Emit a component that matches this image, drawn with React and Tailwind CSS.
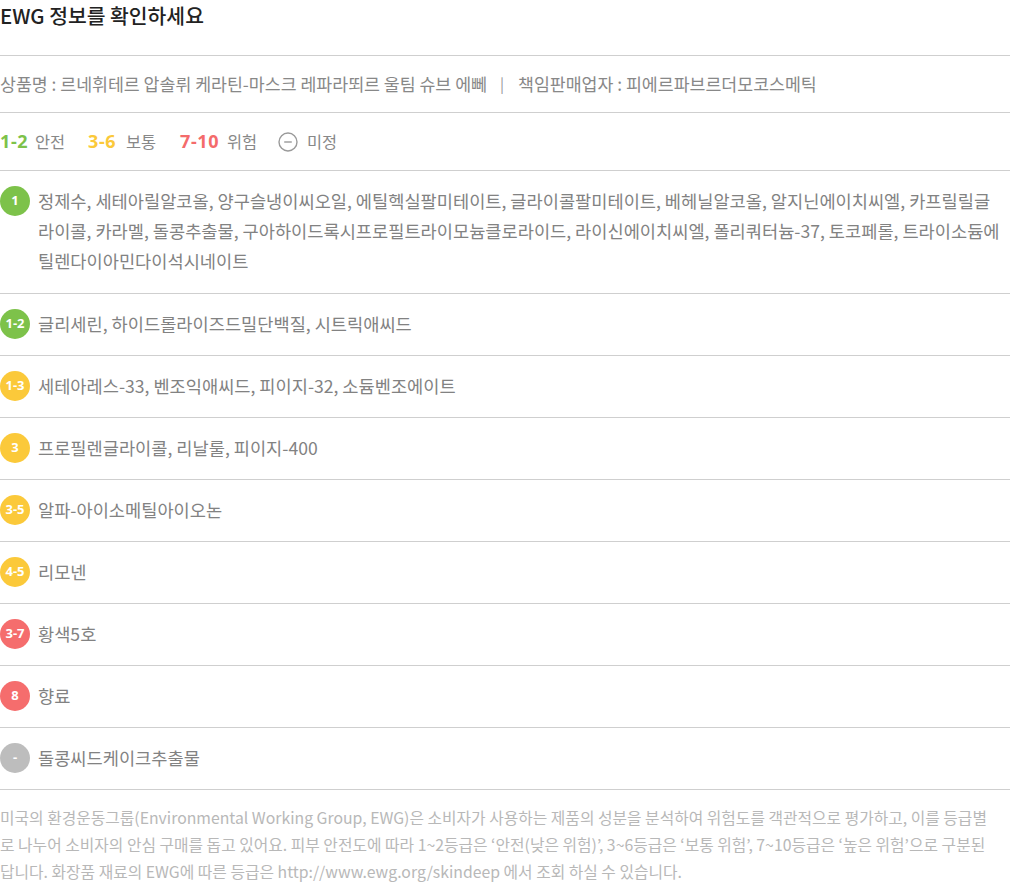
import React from "react";

const font = { fontFamily: '"Noto Sans CJK KR", "Noto Sans", sans-serif' };
const numFont = { fontFamily: '"Open Sans", "Noto Sans", sans-serif' };

const rows = [
  {
    g: "1",
    c: "bg-[#7dc24a]",
    lines: [
      "정제수, 세테아릴알코올, 양구슬냉이씨오일, 에틸헥실팔미테이트, 글라이콜팔미테이트, 베헤닐알코올, 알지닌에이치씨엘, 카프릴릴글",
      "라이콜, 카라멜, 돌콩추출물, 구아하이드록시프로필트라이모늄클로라이드, 라이신에이치씨엘, 폴리쿼터늄-37, 토코페롤, 트라이소듐에",
      "틸렌다이아민다이석시네이트",
    ],
  },
  { g: "1-2", c: "bg-[#7dc24a]", lines: ["글리세린, 하이드롤라이즈드밀단백질, 시트릭애씨드"] },
  { g: "1-3", c: "bg-[#fbc93a]", lines: ["세테아레스-33, 벤조익애씨드, 피이지-32, 소듐벤조에이트"] },
  { g: "3", c: "bg-[#fbc93a]", lines: ["프로필렌글라이콜, 리날룰, 피이지-400"] },
  { g: "3-5", c: "bg-[#fbc93a]", lines: ["알파-아이소메틸아이오논"] },
  { g: "4-5", c: "bg-[#fbc93a]", lines: ["리모넨"] },
  { g: "3-7", c: "bg-[#f56d6d]", lines: ["황색5호"] },
  { g: "8", c: "bg-[#f56d6d]", lines: ["향료"] },
  { g: "-", c: "bg-[#bdbdbd]", lines: ["돌콩씨드케이크추출물"] },
];

const footer = [
  "미국의 환경운동그룹(Environmental Working Group, EWG)은 소비자가 사용하는 제품의 성분을 분석하여 위험도를 객관적으로 평가하고, 이를 등급별",
  "로 나누어 소비자의 안심 구매를 돕고 있어요. 피부 안전도에 따라 1~2등급은 ‘안전(낮은 위험)’, 3~6등급은 ‘보통 위험’, 7~10등급은 ‘높은 위험’으로 구분된",
  "답니다. 화장품 재료의 EWG에 따른 등급은 http://www.ewg.org/skindeep 에서 조회 하실 수 있습니다.",
];

export default function App() {
  return (
    <div className="w-[1010px] bg-white overflow-hidden" style={font}>
      <div className="h-[56px] border-b border-[#cfcfcf]">
        <h1 className="text-[20.4px] leading-[30px] font-medium text-[#222]">EWG 정보를 확인하세요</h1>
      </div>
      <div className="h-[57px] flex items-center border-b border-[#cfcfcf] text-[17.3px] text-[#888] whitespace-nowrap">
        <span>상품명 : 르네휘테르 압솔뤼 케라틴-마스크 레파라뙤르 울팀 슈브 에뻬</span>
        <span className="ml-[13px] mr-[14px] text-[#999] text-[15px]">|</span>
        <span>책임판매업자 : 피에르파브르더모코스메틱</span>
      </div>
      <div className="h-[58px] flex items-center border-b border-[#cfcfcf] text-[16.4px] text-[#888]">
        <span className="w-[35px] shrink-0 font-bold text-[18px] text-[#7dc24a] tracking-[0.6px]" style={numFont}>1-2</span>
        <span className="w-[53px] shrink-0">안전</span>
        <span className="w-[38px] shrink-0 font-bold text-[18px] text-[#fbc93a] tracking-[0.6px]" style={numFont}>3-6</span>
        <span className="w-[54px] shrink-0">보통</span>
        <span className="w-[47px] shrink-0 font-bold text-[18px] text-[#f46b6b] tracking-[0.6px]" style={numFont}>7-10</span>
        <span className="w-[51px] shrink-0">위험</span>
        <svg className="shrink-0" width="20" height="20" viewBox="0 0 20 20" fill="none">
          <circle cx="10" cy="10" r="9" stroke="#9a9a9a" strokeWidth="1.4" />
          <line x1="6.2" y1="10" x2="13.8" y2="10" stroke="#9a9a9a" strokeWidth="1.4" />
        </svg>
        <span className="ml-[9px]">미정</span>
      </div>
      {rows.map((r, i) => (
        <div
          key={r.g}
          className={`flex items-start pt-[15px] border-b border-[#cfcfcf] ${i === 0 ? "pb-[17px]" : "pb-[16px]"}`}
        >
          <div
            className={`w-[30px] h-[30px] shrink-0 rounded-full ${r.c} flex items-center justify-center text-white text-[13px] font-bold`}
            style={numFont}
          >
            {r.g}
          </div>
          <div className="ml-[8px] text-[17.6px] leading-[30px] text-[#828282] whitespace-nowrap">
            {r.lines.map((l) => (
              <div key={l}>{l}</div>
            ))}
          </div>
        </div>
      ))}
      <div className="pt-[14px] text-[15.8px] leading-[27px] text-[#b8b8b8] whitespace-nowrap">
        {footer.map((l) => (
          <div key={l}>{l}</div>
        ))}
      </div>
    </div>
  );
}
